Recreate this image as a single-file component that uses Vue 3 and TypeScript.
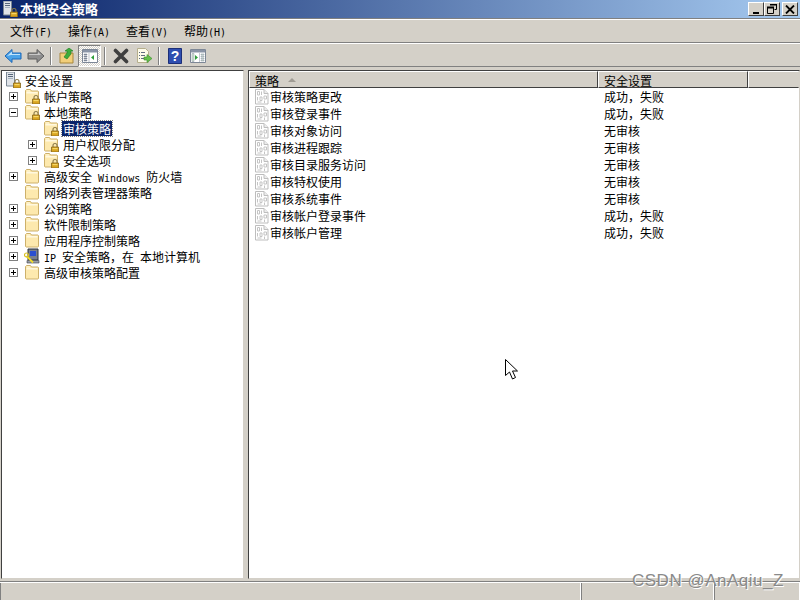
<script setup lang="ts">
interface TreeRow {
  label: string
  level: number
  toggle?: '+' | '-'
  icon: 'server' | 'folder' | 'lock' | 'ipsec'
  selected?: boolean
}

const menus = ['文件(F)', '操作(A)', '查看(V)', '帮助(H)']

const tree: TreeRow[] = [
  { label: '安全设置', level: -1, icon: 'server' },
  { label: '帐户策略', level: 0, toggle: '+', icon: 'lock' },
  { label: '本地策略', level: 0, toggle: '-', icon: 'lock' },
  { label: '审核策略', level: 1, icon: 'lock', selected: true },
  { label: '用户权限分配', level: 1, toggle: '+', icon: 'lock' },
  { label: '安全选项', level: 1, toggle: '+', icon: 'lock' },
  { label: '高级安全 Windows 防火墙', level: 0, toggle: '+', icon: 'folder' },
  { label: '网络列表管理器策略', level: 0, icon: 'folder' },
  { label: '公钥策略', level: 0, toggle: '+', icon: 'folder' },
  { label: '软件限制策略', level: 0, toggle: '+', icon: 'folder' },
  { label: '应用程序控制策略', level: 0, toggle: '+', icon: 'folder' },
  { label: 'IP 安全策略，在 本地计算机', level: 0, toggle: '+', icon: 'ipsec' },
  { label: '高级审核策略配置', level: 0, toggle: '+', icon: 'folder' }
]

const policies = [
  { name: '审核策略更改', value: '成功，失败' },
  { name: '审核登录事件', value: '成功，失败' },
  { name: '审核对象访问', value: '无审核' },
  { name: '审核进程跟踪', value: '无审核' },
  { name: '审核目录服务访问', value: '无审核' },
  { name: '审核特权使用', value: '无审核' },
  { name: '审核系统事件', value: '无审核' },
  { name: '审核帐户登录事件', value: '成功，失败' },
  { name: '审核帐户管理', value: '成功，失败' }
]

// SimSun has half-width latin glyphs, so latin runs get a smaller mono size
function parts(text: string) {
  return text
    .split(/([A-Za-z() ]+)/)
    .filter(Boolean)
    .map(t => ({ text: t, latin: /^[A-Za-z() ]+$/.test(t) }))
}

function rowIndent(level: number) {
  return `${3 + 19 * Math.max(level, 0)}px`
}
</script>

<template>
  <div class="window">
    <svg class="sprite" width="0" height="0">
      <defs>
        <symbol id="folder" viewBox="0 0 16 16">
          <path d="M1.500 2.500 2.500 1.500h4l1 1.500h6.500l.5.5v11l-.5.5H2l-.5-.5z" fill="#fde9ae" stroke="#cdb06a" />
          <path d="M2.500 4h11v1.500h-11z" fill="#fff8e0" />
          <path d="M3 2.500h3v1H3z" fill="#fff8e0" />
        </symbol>
        <symbol id="padlock" viewBox="0 0 16 16">
          <path d="M10 11V9.500a2 2 0 0 1 4 0V11" fill="none" stroke="#8a7a4a" stroke-width="1.100" />
          <path d="M8.500 11h7v5h-7z" fill="#d9a520" stroke="#86661a" stroke-width=".8" />
          <path d="M9.500 12h5v1.200h-5z" fill="#f5d768" />
        </symbol>
        <symbol id="server" viewBox="0 0 16 16">
          <path d="M1.500 0h8v14h-8z" fill="#dfe3e8" stroke="#7b8794" />
          <path d="M3 2h5v1H3zM3 4h5v1H3z" fill="#59697d" />
          <path d="M3 6h5v1H3z" fill="#a7b3c0" />
        </symbol>
        <symbol id="doc" viewBox="0 0 16 16">
          <path d="M1.500 .5h8.500l4 4v10.500h-12.500z" fill="#fff" stroke="#bdbdbd" />
          <path d="M10 .5v4h4" fill="#ececec" stroke="#bdbdbd" />
          <path d="M3.500 2.500h2v3.500h-2zM7.500 2.500v3.500M3.500 8v3.500M6 8h2v3.500H6zM3.500 13h4M10 7h2.500v3H10zM10.500 11.500v2.500" fill="none" stroke="#c4c4c4" />
        </symbol>
      </defs>
    </svg>

    <header class="titlebar">
      <svg class="title-icon" width="16" height="16">
        <use href="#server" /><use href="#padlock" />
      </svg>
      <span class="title-text">本地安全策略</span>
      <div class="win-buttons">
        <button class="win-btn"><i class="glyph-min"></i></button>
        <button class="win-btn">
          <svg width="10" height="10" viewBox="0 0 10 10">
            <path d="M3.500.5h6v5h-2M.5 3.500h6v6h-6z" fill="none" stroke="#000" />
            <path d="M3 1h7M0 4h7" stroke="#000" stroke-width="2" transform="translate(0 -.5)" />
          </svg>
        </button>
        <button class="win-btn close">
          <svg width="10" height="9" viewBox="0 0 10 9">
            <path d="M1 .5 9 8.500M9 .5 1 8.500" stroke="#000" stroke-width="1.800" />
          </svg>
        </button>
      </div>
    </header>

    <nav class="menubar">
      <span v-for="m in menus" :key="m" class="menu-item">
        <template v-for="p in parts(m)" :key="p.text">
          <span :class="{ latin: p.latin }">{{ p.text }}</span>
        </template>
      </span>
    </nav>

    <div class="toolbar">
      <button class="tool">
        <svg width="18" height="16" viewBox="0 0 18 16">
          <path d="M1 8 8 1.500V5h9v6H8v3.500z" fill="#4ba3e8" stroke="#1b66b8" />
          <path d="M3 8 8 3.500V6h8v1H7z" fill="#bfe3fb" />
        </svg>
      </button>
      <button class="tool">
        <svg width="18" height="16" viewBox="0 0 18 16">
          <path d="M17 8 10 1.500V5H1v6h9v3.500z" fill="#8e8e8e" stroke="#5f5f5f" />
          <path d="M2 6h9V4l3 3H2z" fill="#c8c8c8" />
        </svg>
      </button>
      <i class="tool-sep"></i>
      <button class="tool">
        <svg width="16" height="16" viewBox="0 0 16 16">
          <path d="M1 5h13v10H1z" fill="#f2cf7a" stroke="#a8873c" />
          <path d="M5 9 8 5V3H6l4-3 4 3h-2v3l-4 5z" fill="#3cad3c" stroke="#1d7a1d" stroke-width=".6" />
        </svg>
      </button>
      <button class="tool active">
        <svg width="16" height="14" viewBox="0 0 16 14">
          <path d="M.5.5h15v13H.5z" fill="#fff" stroke="#7d8796" />
          <path d="M1 1h14v2.500H1z" fill="#8a94a6" />
          <path d="M2 5h3v1H2zM2 7h3v1H2zM2 9h3v1H2zM2 11h3v1H2zM7 4v9" stroke="#7d8796" fill="#7d8796" stroke-width=".5" />
          <path d="M12 6v5L9 8.500z" fill="#2e9e3a" />
        </svg>
      </button>
      <i class="tool-sep"></i>
      <button class="tool">
        <svg width="16" height="16" viewBox="0 0 16 16">
          <path d="M2.500 2.500 13.500 13.500M13.500 2.500 2.500 13.500" stroke="#3f3f3f" stroke-width="3.600" stroke-linecap="round" />
        </svg>
      </button>
      <button class="tool">
        <svg width="16" height="16" viewBox="0 0 16 16">
          <path d="M1.500.5h8l3 3v11h-11z" fill="#fdfbea" stroke="#b5ae8c" />
          <path d="M3 4h1v1H3zM3 7h1v1H3zM3 10h1v1H3zM5 4h4v1H5zM5 7h4v1H5zM5 10h3v1H5z" fill="#5f6c80" />
          <path d="M8 9h3V6.500l5 4-5 4V12H8z" fill="#66bf4c" stroke="#3a8f2c" stroke-width=".6" />
        </svg>
      </button>
      <i class="tool-sep"></i>
      <button class="tool">
        <svg width="14" height="16" viewBox="0 0 14 16">
          <path d="M.5.5h13v15H.5z" fill="#2f4eb0" stroke="#1c2f78" />
          <text x="7" y="13" class="help-mark">?</text>
        </svg>
      </button>
      <button class="tool">
        <svg width="16" height="14" viewBox="0 0 16 14">
          <path d="M.5.5h15v13H.5z" fill="#fff" stroke="#7d8796" />
          <path d="M1 1h14v2.500H1z" fill="#8a94a6" />
          <path d="M2 4.500h2v8H2zM11 5h3v1h-3zM11 7h3v1h-3zM11 9h3v1h-3zM11 11h3v1h-3zM9.500 4v9" stroke="#8a94a6" fill="#cfe3cf" stroke-width=".5" />
          <path d="M5 6v5l3-2.500z" fill="#2e9e3a" />
        </svg>
      </button>
    </div>

    <main class="panes">
      <aside class="tree-pane">
        <div
          v-for="row in tree"
          :key="row.label"
          class="tree-row"
          :style="{ paddingLeft: rowIndent(row.level) }"
        >
          <span v-if="row.level >= 0" class="toggle-slot">
            <span v-if="row.toggle" class="toggle">
              <i class="bar"></i>
              <i v-if="row.toggle === '+'" class="bar vert"></i>
            </span>
          </span>
          <svg v-if="row.icon === 'ipsec'" class="row-icon" width="16" height="16" viewBox="0 0 16 16">
            <path d="M4 1h10v11H4z" fill="#7a808c" stroke="#2b303a" />
            <path d="M6 3h6v5H6z" fill="#2a4fd0" />
            <path d="M3 12.500h12v2.500H3z" fill="#9a9fa8" stroke="#3c4048" stroke-width=".6" />
            <path d="M2.500 8 9 14.500" stroke="#f2dc2a" stroke-width="1.800" />
            <circle cx="2.500" cy="7" r="2" fill="none" stroke="#d8c020" stroke-width="1.200" />
          </svg>
          <svg v-else class="row-icon" width="16" height="16">
            <use :href="row.icon === 'server' ? '#server' : '#folder'" />
            <use v-if="row.icon !== 'folder'" href="#padlock" />
          </svg>
          <span class="tree-label" :class="{ selected: row.selected }">
            <template v-for="p in parts(row.label)" :key="p.text">
              <span :class="{ latin: p.latin }">{{ p.text }}</span>
            </template>
          </span>
        </div>
      </aside>

      <section class="list-pane">
        <div class="list-head">
          <div class="col-head name">
            策略
            <i class="sort-arrow"></i>
          </div>
          <div class="col-head value">安全设置</div>
          <div class="col-head rest"></div>
        </div>
        <div v-for="p in policies" :key="p.name" class="list-row">
          <div class="cell-name">
            <svg width="16" height="16"><use href="#doc" /></svg>
            <span>{{ p.name }}</span>
          </div>
          <div class="cell-value">{{ p.value }}</div>
        </div>
      </section>
    </main>

    <footer class="statusbar">
      <div class="status-panel main"></div>
      <div class="status-panel mid"></div>
      <div class="status-panel end"></div>
    </footer>

    <svg class="cursor" width="13" height="22" viewBox="0 0 13 22">
      <path d="M.5.5v16l4-3.500 3 7 3-1.500-3-6.500h5z" fill="#fff" stroke="#000" />
    </svg>
    <div class="watermark">CSDN @AnAqiu_Z</div>
  </div>
</template>

<style scoped>
.window {
  position: relative;
  width: 800px;
  height: 600px;
  overflow: hidden;
  display: flex;
  flex-direction: column;
  background: #d4d0c8;
  color: #000;
  font-family: "Noto Sans CJK SC", "Liberation Sans", sans-serif;
  font-size: 12px;
  line-height: 16px;
}

.sprite {
  position: absolute;
}

.latin {
  font-family: "DejaVu Sans Mono", monospace;
  font-size: 10px;
  white-space: pre;
}

.titlebar {
  height: 18px;
  flex: none;
  display: flex;
  align-items: center;
  padding: 0 2px;
  background: linear-gradient(90deg, #0a246a, #a6caf0);
}

.title-icon {
  flex: none;
}

.title-text {
  margin-left: 2px;
  color: #fff;
  font-size: 13px;
  font-weight: 700;
}

.win-buttons {
  margin-left: auto;
  display: flex;
}

.win-btn {
  width: 16px;
  height: 14px;
  margin-left: 0;
  padding: 0;
  display: flex;
  align-items: center;
  justify-content: center;
  background: #d4d0c8;
  border: 1px solid;
  border-color: #fff #404040 #404040 #fff;
}

.win-btn.close {
  margin-left: 2px;
}

.glyph-min {
  width: 6px;
  height: 2px;
  margin-top: 7px;
  background: #000;
}

.menubar {
  height: 25px;
  flex: none;
  box-sizing: border-box;
  display: flex;
  align-items: center;
  gap: 17px;
  padding: 2px 0 0 10px;
  border-top: 1px solid #808080;
  border-bottom: 1px solid #808080;
  box-shadow: inset 0 1px 0 #fff;
}

.menu-item {
  width: 41px;
  white-space: nowrap;
}

.toolbar {
  height: 24px;
  flex: none;
  box-sizing: border-box;
  display: flex;
  align-items: center;
  padding: 1px 0 0 1px;
  border-top: 1px solid #fff;
  border-bottom: 1px solid #808080;
}

.tool {
  width: 23px;
  height: 22px;
  padding: 0;
  display: flex;
  align-items: center;
  justify-content: center;
  background: transparent;
  border: 1px solid transparent;
}

.tool.active {
  border-color: #808080 #fff #fff #808080;
  background: repeating-conic-gradient(#fff 0 25%, #d4d0c8 0 50%) 0 0 / 2px 2px;
}

.tool-sep {
  width: 1px;
  height: 18px;
  margin: 0 3px 0 3px;
  background: #808080;
  border-right: 1px solid #fff;
}

.help-mark {
  fill: #fff;
  font-family: "Liberation Sans", sans-serif;
  font-size: 14px;
  font-weight: 700;
  text-anchor: middle;
}

.panes {
  flex: 1;
  min-height: 0;
  display: flex;
  gap: 4px;
  padding: 3px 0 2px 1px;
  border-bottom: 1px solid #808080;
}

.tree-pane {
  width: 243px;
  box-sizing: border-box;
  padding-top: 1px;
  background: #fff;
  border: 1px solid;
  border-color: #404040 #d4d0c8 #d4d0c8 #404040;
}

.tree-row {
  height: 16px;
  display: flex;
  align-items: center;
  white-space: nowrap;
}

.toggle-slot {
  width: 19px;
  flex: none;
  padding-left: 4px;
  box-sizing: border-box;
}

.toggle {
  position: relative;
  display: block;
  width: 9px;
  height: 9px;
  box-sizing: border-box;
  border: 1px solid #808080;
  background: #fff;
}

.bar {
  position: absolute;
  left: 1px;
  top: 3px;
  width: 5px;
  height: 1px;
  background: #000;
}

.bar.vert {
  left: 3px;
  top: 1px;
  width: 1px;
  height: 5px;
}

.row-icon {
  flex: none;
  margin-right: 3px;
}

.tree-label {
  padding: 0 1px;
  height: 15px;
  line-height: 15px;
}

.tree-label.selected {
  color: #fff;
  background: #0a246a;
  outline: 1px dotted #808080;
}

.list-pane {
  flex: 1;
  min-width: 0;
  background: #fff;
  border: 1px solid;
  border-color: #404040 #d4d0c8 #d4d0c8 #404040;
}

.list-head {
  height: 17px;
  display: flex;
}

.col-head {
  box-sizing: border-box;
  height: 17px;
  position: relative;
  padding-left: 5px;
  line-height: 17px;
  background: #d4d0c8;
  border: 1px solid;
  border-color: #fff #404040 #404040 #fff;
}

.col-head.name {
  width: 349px;
}

.col-head.value {
  width: 150px;
}

.col-head.rest {
  flex: 1;
  border-right-color: #d4d0c8;
}

.sort-arrow {
  position: absolute;
  left: 38px;
  top: 6px;
  width: 0;
  height: 0;
  border: 4px solid transparent;
  border-top: 0;
  border-bottom-color: #a09c94;
}

.list-row {
  height: 17px;
  display: flex;
  align-items: center;
}

.cell-name {
  width: 349px;
  display: flex;
  align-items: center;
  gap: 0;
  padding-left: 5px;
  box-sizing: border-box;
}

.cell-value {
  padding-left: 6px;
}

.statusbar {
  height: 18px;
  flex: none;
  display: flex;
  border-top: 1px solid #fff;
  box-sizing: border-box;
}

.status-panel {
  border-left: 1px solid #808080;
  border-right: 1px solid #fff;
  box-sizing: border-box;
}

.status-panel.main {
  width: 581px;
}

.status-panel.mid {
  width: 133px;
}

.status-panel.end {
  flex: 1;
}

.cursor {
  position: absolute;
  left: 505px;
  top: 359px;
}

.watermark {
  position: absolute;
  left: 632px;
  top: 571px;
  color: #8a8a8a;
  font-family: "Liberation Sans", sans-serif;
  font-size: 17px;
  line-height: 20px;
  letter-spacing: .5px;
  text-shadow: 1px 1px 0 #fff;
  white-space: nowrap;
}
</style>

<style>
body {
  margin: 0;
}
</style>
